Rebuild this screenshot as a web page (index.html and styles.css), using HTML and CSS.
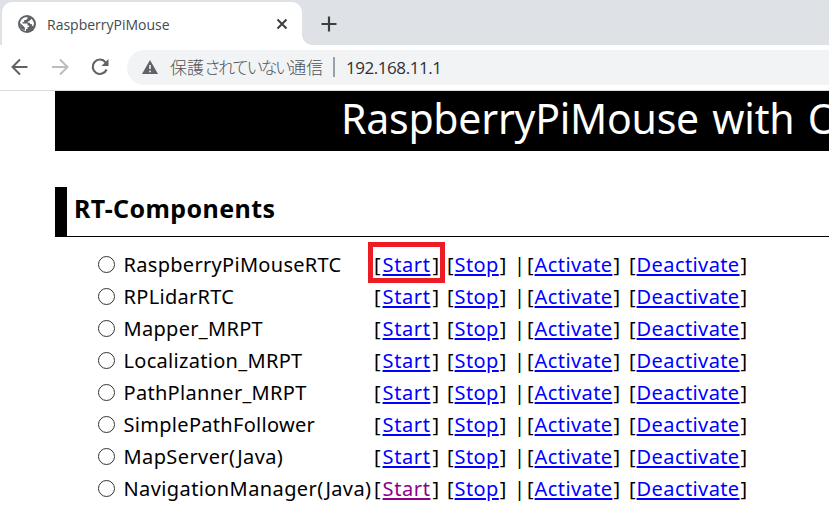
FILE: index.html
```html
<!DOCTYPE html>
<html lang="ja">
<head>
<meta charset="utf-8">
<title>RaspberryPiMouse</title>
<link rel="stylesheet" href="styles.css">
</head>
<body>
<header class="tabs">
  <div class="tab">
    <svg class="globe" viewBox="0 0 18 18"><circle cx="9" cy="9" r="9" fill="#5f6368"/><path d="M9.500 2 9.500 3.500 8 5H6.200V7H4.500V8.500H9.500V10.500H11V12H9.500V14H8V16C4.500 15.500 2 12.600 2 9 2 5 5 2 9.500 2ZM13.500 3.800 15.200 6 16 8.500 15.200 11.500 13.800 10.200V9H12V7.800H9.800V6.800L12 5.500Z" fill="#fff"/><path d="M2.100 8 6.800 12.500V15.500A7 7 0 0 1 2.100 8Z" fill="#5f6368"/></svg>
    <span class="tab-title">RaspberryPiMouse</span>
    <svg class="close" viewBox="0 0 12 12"><path d="m1.500 1.500 9 9m0-9-9 9" fill="none" stroke="#3c4043" stroke-width="2"/></svg>
  </div>
  <svg class="plus" viewBox="0 0 16 16"><path d="M8 .5v15M.5 8h15" stroke="#3c4043" stroke-width="2.2"/></svg>
</header>
<nav class="toolbar">
  <svg class="icon" viewBox="0 0 20 20"><path d="M17.500 10H3M10 2.500 2.500 10l7.500 7.500" fill="none" stroke="#5f6368" stroke-width="2"/></svg>
  <svg class="icon" viewBox="0 0 20 20"><path d="M2 10h15M10 2.500l7.500 7.500-7.500 7.500" fill="none" stroke="#babcbe" stroke-width="2"/></svg>
  <svg class="icon" viewBox="0 0 20 20"><path d="M16.600 12.500A7.200 7.200 0 1 1 15.600 5.300" fill="none" stroke="#5f6368" stroke-width="2.100"/><path d="M18.500 2v7h-7Z" fill="#5f6368"/></svg>
  <div class="address">
    <svg class="warn" viewBox="0 0 16 14"><path d="M8 0 16 14H0Z" fill="#5f6368"/><path d="M8 5v4M8 10.400v1.800" stroke="#f1f3f4" stroke-width="1.600"/></svg>
    <span class="insecure">保護<span class="kana">されていない</span>通信</span>
    <span class="divider"></span>
    <span class="url">192.168.11.1</span>
  </div>
</nav>
<main>
  <h1>RaspberryPiMouse with O</h1>
  <h2>RT-Components</h2>
  <ul>
    <li><span class="name">RaspberryPiMouseRTC</span><span class="start marked">[<a href="#">Start</a>]</span><span class="stop">[<a href="#">Stop</a>]</span><span class="bar">|</span><span class="activate">[<a href="#">Activate</a>]</span><span class="deactivate">[<a href="#">Deactivate</a>]</span></li>
    <li><span class="name">RPLidarRTC</span><span class="start">[<a href="#">Start</a>]</span><span class="stop">[<a href="#">Stop</a>]</span><span class="bar">|</span><span class="activate">[<a href="#">Activate</a>]</span><span class="deactivate">[<a href="#">Deactivate</a>]</span></li>
    <li><span class="name">Mapper_MRPT</span><span class="start">[<a href="#">Start</a>]</span><span class="stop">[<a href="#">Stop</a>]</span><span class="bar">|</span><span class="activate">[<a href="#">Activate</a>]</span><span class="deactivate">[<a href="#">Deactivate</a>]</span></li>
    <li><span class="name">Localization_MRPT</span><span class="start">[<a href="#">Start</a>]</span><span class="stop">[<a href="#">Stop</a>]</span><span class="bar">|</span><span class="activate">[<a href="#">Activate</a>]</span><span class="deactivate">[<a href="#">Deactivate</a>]</span></li>
    <li><span class="name">PathPlanner_MRPT</span><span class="start">[<a href="#">Start</a>]</span><span class="stop">[<a href="#">Stop</a>]</span><span class="bar">|</span><span class="activate">[<a href="#">Activate</a>]</span><span class="deactivate">[<a href="#">Deactivate</a>]</span></li>
    <li><span class="name">SimplePathFollower</span><span class="start">[<a href="#">Start</a>]</span><span class="stop">[<a href="#">Stop</a>]</span><span class="bar">|</span><span class="activate">[<a href="#">Activate</a>]</span><span class="deactivate">[<a href="#">Deactivate</a>]</span></li>
    <li><span class="name java">MapServer(Java)</span><span class="start">[<a href="#">Start</a>]</span><span class="stop">[<a href="#">Stop</a>]</span><span class="bar">|</span><span class="activate">[<a href="#">Activate</a>]</span><span class="deactivate">[<a href="#">Deactivate</a>]</span></li>
    <li><span class="name java">NavigationManager(Java)</span><span class="start">[<a class="visited" href="#">Start</a>]</span><span class="stop">[<a href="#">Stop</a>]</span><span class="bar">|</span><span class="activate">[<a href="#">Activate</a>]</span><span class="deactivate">[<a href="#">Deactivate</a>]</span></li>
  </ul>
</main>
</body>
</html>
```
FILE: styles.css
```css
*, *::before, *::after { box-sizing: border-box; }
body { margin: 0; height: 517px; overflow: hidden; background: #fff; color: #000; font-family: "Noto Sans", "Noto Sans CJK JP", sans-serif; }
svg { display: block; flex: none; }
.tabs { display: flex; height: 45px; background: #dee1e6; padding: 2px 0 0 2px; }
.tab { position: relative; display: flex; align-items: center; width: 300px; height: 43px; padding: 0 14px 0 16px; background: #fff; border-radius: 10px 10px 0 0; }
.tab::after { content: ""; position: absolute; left: 100%; bottom: 0; width: 10px; height: 10px; background: radial-gradient(circle at 100% 0, transparent 9.5px, #fff 10px); }
.globe { width: 18px; height: 18px; }
.tab-title { margin-left: 11px; padding-top: 2px; font: 14px/20px "Open Sans", sans-serif; color: #45494d; }
.close { width: 12px; height: 12px; margin-left: auto; }
.plus { width: 16px; height: 16px; margin: 14px 0 0 19px; }
.toolbar { display: flex; align-items: center; height: 46px; padding: 0 0 1px 10px; border-bottom: 1px solid #dadcdc; }
.icon { width: 20px; height: 20px; margin-right: 20px; }
.address { display: flex; align-items: center; flex: 1; height: 35px; margin-left: -3px; padding-left: 15px; background: #f1f3f4; border-radius: 18px 0 0 18px; }
.warn { width: 16px; height: 14px; }
.insecure { display: flex; width: 153px; margin-left: 12px; font: 300 17px/24px "Noto Sans CJK JP", sans-serif; color: #4d5155; white-space: nowrap; }
.kana { letter-spacing: -2.7px; }
.divider { width: 2px; height: 20px; margin: 0 11px 0 10px; background: #9aa0a6; }
.url { padding-top: 1px; font: 17px/24px "Open Sans", sans-serif; color: #303134; letter-spacing: -.45px; }
main { padding-left: 55px; }
h1 { margin: 0; height: 60px; padding-left: 286px; background: #000; color: #fff; font-size: 41px; font-weight: 400; line-height: 54px; letter-spacing: -.25px; word-spacing: 3px; white-space: nowrap; overflow: hidden; }
h2 { position: relative; margin: 36px 0 0; height: 50px; padding-left: 19px; border-bottom: 1px solid #000; font-size: 25px; font-weight: 700; line-height: 43px; letter-spacing: .4px; }
h2::before { content: ""; position: absolute; left: 0; top: 0; width: 12px; height: 50px; background: #000; }
ul { list-style: none; margin: 0; padding: 12px 0 0 43px; }
li { display: grid; grid-template-columns: 25.5px 250.5px 73px 67px 13px 102px 130px; height: 32px; align-items: center; font-size: 20px; line-height: 32px; white-space: nowrap; }
li::before { content: ""; width: 17px; height: 17px; margin-top: -1px; border: 1px solid #333; border-radius: 50%; }
.name { letter-spacing: .3px; }
.java { letter-spacing: .4px; }
.marked { position: relative; }
.marked::after { content: ""; position: absolute; left: -6px; top: -7px; width: 77px; height: 41px; border: 5px solid #ed1c24; }
a { margin: 0 1px; color: #00f; letter-spacing: .4px; text-decoration: underline; text-decoration-thickness: 2px; text-underline-offset: 2px; }
.start a { margin: 0 2px; letter-spacing: .6px; }
.start a.visited { color: #8b008b; }
```
